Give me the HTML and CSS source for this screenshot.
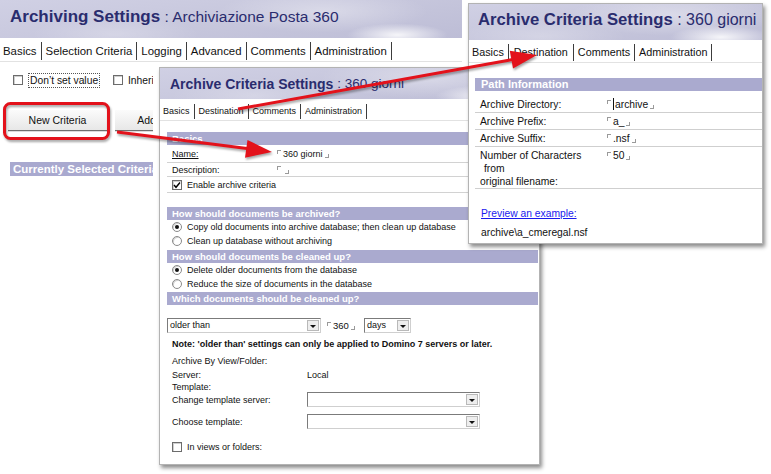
FILE: index.html
```html
<!DOCTYPE html>
<html>
<head>
<meta charset="utf-8">
<title>Archiving Settings</title>
<link rel="stylesheet" href="styles.css">
</head>
<body>
<div class="desk">

  <div class="win base">
    <div class="banner"><span class="tb">Archiving Settings</span><span class="tr">&nbsp;: Archiviazione Posta 360</span></div>
    <div class="tabs">
      <span class="tab">Basics</span><span class="tab sel">Selection Criteria</span><span class="tab">Logging</span><span class="tab">Advanced</span><span class="tab">Comments</span><span class="tab">Administration</span>
    </div>
    <div class="base-body">
      <div class="chkrow">
        <span class="chk first"><span class="box"></span><span class="focus">Don’t set value</span></span>
        <span class="chk"><span class="box"></span><span>Inherit</span></span>
      </div>
      <div class="btnrow"><span class="btn">New Criteria</span><span class="btn add">Add Criteria</span></div>
      <div class="cur-bar">Currently Selected Criteria</div>
    </div>
  </div>

  <div class="win mid">
    <div class="banner"><span class="tb">Archive Criteria Settings</span><span class="tr">&nbsp;: 360 giorni</span></div>
    <div class="tabs">
      <span class="tab sel">Basics</span><span class="tab">Destination</span><span class="tab">Comments</span><span class="tab">Administration</span>
    </div>
    <div class="mbody">
      <div class="bar b1">Basics</div>
      <div class="frow r-name"><span class="lab"><u>Name:</u></span><span class="val"><i class="fo"></i>360 giorni<i class="fc"></i></span></div>
      <div class="frow r-desc"><span class="lab">Description:</span><span class="val"><i class="fo"></i><i class="fc"></i></span></div>
      <div class="frow r-en"><span class="box on"><svg width="8" height="8" viewBox="0 0 8 8"><path d="M1 4 L3 6.3 L7 1.5" fill="none" stroke="#000" stroke-width="1.4"/></svg></span><span class="ctext">Enable archive criteria</span></div>

      <div class="bar b2">How should documents be archived?</div>
      <div class="rrow"><span class="radio on"></span><span class="ctext">Copy old documents into archive database; then clean up database</span></div>
      <div class="rrow"><span class="radio"></span><span class="ctext">Clean up database without archiving</span></div>

      <div class="bar b3">How should documents be cleaned up?</div>
      <div class="rrow"><span class="radio on"></span><span class="ctext">Delete older documents from the database</span></div>
      <div class="rrow"><span class="radio"></span><span class="ctext">Reduce the size of documents in the database</span></div>

      <div class="bar b4">Which documents should be cleaned up?</div>
      <div class="selrow">
        <span class="sel-box w-older"><span class="sel-text">older than</span><span class="sel-btn"></span></span>
        <span class="numf"><i class="fo"></i>360<i class="fc"></i></span>
        <span class="sel-box w-days"><span class="sel-text">days</span><span class="sel-btn"></span></span>
      </div>
      <div class="note">Note: 'older than' settings can only be applied to Domino 7 servers or later.</div>
      <div class="prow r-abv"><span class="lab2">Archive By View/Folder:</span></div>
      <div class="prow r-srv"><span class="lab2">Server:</span><span>Local</span></div>
      <div class="prow r-tpl"><span class="lab2">Template:</span></div>
      <div class="prow r-cts"><span class="lab2">Change template server:</span><span class="sel-box w-tpl"><span class="sel-text"></span><span class="sel-btn"></span></span></div>
      <div class="prow r-ct"><span class="lab2">Choose template:</span><span class="sel-box w-tpl"><span class="sel-text"></span><span class="sel-btn"></span></span></div>
      <div class="prow r-inv"><span class="box"></span><span class="ctext">In views or folders:</span></div>
    </div>
  </div>

  <div class="win right">
    <div class="banner"><span class="tb">Archive Criteria Settings</span><span class="tr">&nbsp;: 360 giorni</span></div>
    <div class="tabs">
      <span class="tab">Basics</span><span class="tab sel">Destination</span><span class="tab">Comments</span><span class="tab">Administration</span>
    </div>
    <div class="rbody">
      <div class="bar pbar">Path Information</div>
      <div class="rrow2 first"><span class="lab3">Archive Directory:</span><span class="val"><i class="fo"></i><span class="caret"></span>archive<i class="fc"></i></span></div>
      <div class="rrow2"><span class="lab3">Archive Prefix:</span><span class="val"><i class="fo"></i>a_<i class="fc"></i></span></div>
      <div class="rrow2"><span class="lab3">Archive Suffix:</span><span class="val"><i class="fo"></i>.nsf<i class="fc"></i></span></div>
      <div class="rrow2 tall"><span class="lab3">Number of Characters<br><span class="ind">from</span><br>original filename:</span><span class="val"><i class="fo"></i>50<i class="fc"></i></span></div>
      <div class="preview"><span class="link">Preview an example:</span></div>
      <div class="example">archive\a_cmeregal.nsf</div>
    </div>
  </div>

  <svg class="anno" width="771" height="474" viewBox="0 0 771 474">
    <rect x="4.5" y="103.5" width="104" height="35" rx="6" ry="6" fill="none" stroke="#e3121b" stroke-width="3"/>
    <line x1="117" y1="132" x2="249" y2="148.8" stroke="#e3121b" stroke-width="3"/>
    <polygon points="272,152 245,157.7 247.5,140" fill="#e3121b"/>
    <line x1="238" y1="109" x2="513" y2="59.4" stroke="#e3121b" stroke-width="3"/>
    <polygon points="537,55 513,68.5 509.8,50.7" fill="#e3121b"/>
  </svg>
</div>
</body>
</html>
```

FILE: styles.css
```css
* { box-sizing: border-box; }
html, body { margin: 0; padding: 0; }
body {
  background: #fff;
  font-family: "Liberation Sans", Arial, sans-serif;
  color: #111;
}
.desk {
  position: relative;
  width: 771px;
  height: 474px;
  overflow: hidden;
  background: #fff;
}
.win {
  position: absolute;
  background: #fff;
  overflow: hidden;
}

/* ---------- banners ---------- */
.banner {
  display: flex;
  align-items: center;
  white-space: nowrap;
  color: #2a2c6e;
  background:
    radial-gradient(ellipse 70px 16px at 86% 92%, rgba(255,255,255,.85), rgba(255,255,255,0) 72%),
    radial-gradient(ellipse 150px 30px at 70% 30%, rgba(255,255,255,.35), rgba(255,255,255,0) 70%),
    radial-gradient(ellipse 120px 25px at 25% 90%, rgba(255,255,255,.25), rgba(255,255,255,0) 70%),
    linear-gradient(172deg, #d0d0e4 0%, #c6c6dc 55%, #bdbdd6 100%);
}
.tb { font-weight: bold; }

/* ---------- tabs ---------- */
.tabs {
  display: flex;
  align-items: center;
  border-bottom: 1px solid #e2e2e2;
  white-space: nowrap;
  color: #111;
}
.tab {
  padding: 0 4px;
  border-right: 1px solid #3c3c3c;
}
.tab:first-child { padding-left: 3px; }

/* ---------- base window ---------- */
.base { left: 0; top: 0; width: 462px; height: 200px; }
.base .banner { height: 38px; padding: 0 0 5px 10px; }
.base .tb { font-size: 17px; }
.base .tr { font-size: 15.5px; }
.base .tabs { margin-top: 2px; height: 22px; font-size: 11.4px; }
.base .tab { height: 18px; line-height: 18px; }

.base-body { font-size: 10.3px; width: 153px; overflow: hidden; }
.chkrow {
  display: flex;
  align-items: center;
  margin-top: 10px;
  height: 16px;
  padding-left: 13px;
  white-space: nowrap;
}
.chk { display: flex; align-items: center; flex: none; }
.chk.first { width: 100px; }
.box {
  display: inline-flex;
  align-items: center;
  justify-content: center;
  width: 10px;
  height: 10px;
  flex: none;
  border: 1px solid #6c6c6c;
  background: #fff;
  box-shadow: inset 1px 1px 0 #cfcfcf;
}
.chk .box { margin-right: 5px; }
.focus {
  border: 1px dotted #555;
  padding: 0 1px;
  line-height: 13px;
}
.btnrow {
  display: flex;
  margin-top: 22px;
  padding-left: 8px;
}
.btn {
  display: flex;
  align-items: center;
  justify-content: center;
  width: 99px;
  height: 21px;
  flex: none;
  background: linear-gradient(#fbfbfb, #e7e7e7);
  border-bottom: 1px solid #6f6f6f;
  box-shadow: 0 1px 0 #dcdcdc;
  font-size: 10.5px;
  white-space: nowrap;
}
.btn.add { margin-left: 8px; width: 100px; }
.cur-bar {
  margin-top: 31px;
  margin-left: 10px;
  width: 143px;
  height: 14px;
  line-height: 14px;
  padding-left: 3px;
  overflow: hidden;
  background: #a9a9cf;
  color: #fff;
  font-weight: bold;
  font-size: 11.5px;
  white-space: nowrap;
}

/* ---------- shared form bits ---------- */
.bar {
  background: #aaaacf;
  color: #fff;
  font-weight: bold;
  white-space: nowrap;
}
.fo, .fc {
  display: inline-block;
  width: 4px;
  height: 4px;
  flex: none;
}
.fo {
  border-left: 1px solid #9a9a9a;
  border-top: 1px solid #9a9a9a;
  vertical-align: top;
  margin-right: 2px;
  margin-top: -4px;
}
.fc {
  border-right: 1px solid #9a9a9a;
  border-bottom: 1px solid #9a9a9a;
  vertical-align: bottom;
  margin-left: 2px;
  margin-bottom: -5px;
}
.radio {
  position: relative;
  display: inline-block;
  width: 10px;
  height: 10px;
  flex: none;
  border-radius: 50%;
  border: 1px solid #8a8a8a;
  background: #fff;
  box-shadow: inset 1px 1px 0 #d4d4d4;
}
.radio.on::after {
  content: "";
  position: absolute;
  left: 2px;
  top: 2px;
  width: 4px;
  height: 4px;
  border-radius: 50%;
  background: #111;
}
.ctext { margin-left: 5px; }
.sel-box {
  display: flex;
  height: 15px;
  flex: none;
  border: 1px solid;
  border-color: #7b7b7b #cfcfcf #cfcfcf #7b7b7b;
  background: #fff;
}
.sel-text {
  flex: 1;
  padding-left: 2px;
  line-height: 13px;
  font-size: 9px;
}
.sel-btn {
  position: relative;
  width: 12px;
  margin: 1px;
  background: #eeeeee;
  border: 1px solid #b9b9b9;
}
.sel-btn::after {
  content: "";
  position: absolute;
  left: 2px;
  top: 4px;
  border-left: 3px solid transparent;
  border-right: 3px solid transparent;
  border-top: 3px solid #111;
}

/* ---------- middle window ---------- */
.mid {
  left: 159px;
  top: 67px;
  width: 381px;
  height: 398px;
  border: 1px solid #b3b3b3;
  box-shadow: 2px 3px 4px rgba(0,0,0,.45);
}
.mid .banner { height: 31px; padding-left: 10px; }
.mid .tb { font-size: 14px; }
.mid .tr { font-size: 13.5px; }
.mid .tabs { margin-top: 3px; height: 19px; font-size: 9px; }
.mid .tab { height: 15px; line-height: 15px; }

.mbody { padding: 0 1px 0 7px; font-size: 9px; }
.mbody .bar { height: 13px; line-height: 13px; font-size: 9.5px; padding-left: 5px; }
.b1 { margin-top: 11px; }
.b2 { margin-top: 14px; }
.b3 { margin-top: 2px; }
.b4 { margin-top: 1px; }
.frow {
  display: flex;
  align-items: center;
  padding-left: 5px;
  border-bottom: 1px solid #d2d2d2;
  white-space: nowrap;
}
.r-name { height: 18px; }
.r-desc { height: 14px; }
.r-en { height: 16px; }
.lab { width: 105px; flex: none; }
.val { display: inline-flex; align-items: center; white-space: nowrap; }
.rrow {
  display: flex;
  align-items: center;
  height: 14px;
  padding-left: 5px;
  white-space: nowrap;
}
.selrow {
  display: flex;
  align-items: center;
  margin-top: 13px;
  height: 15px;
}
.w-older { width: 154px; }
.numf {
  display: inline-flex;
  align-items: center;
  width: 43px;
  padding-left: 6px;
  font-size: 9.5px;
}
.w-days { width: 47px; }
.note {
  margin-top: 4px;
  height: 14px;
  line-height: 14px;
  padding-left: 5px;
  font-weight: bold;
  white-space: nowrap;
}
.prow {
  display: flex;
  align-items: center;
  padding-left: 5px;
  white-space: nowrap;
}
.lab2 { width: 135px; flex: none; }
.r-abv { margin-top: 3px; height: 14px; }
.r-srv { height: 13px; }
.r-tpl { height: 11px; }
.r-cts { height: 15px; }
.r-ct { margin-top: 7px; height: 15px; }
.r-inv { margin-top: 11px; height: 14px; }
.w-tpl { width: 173px; }

/* ---------- right window ---------- */
.right {
  left: 468px;
  top: 3px;
  width: 295px;
  height: 241px;
  border: 1px solid #b3b3b3;
  box-shadow: 2px 3px 4px rgba(0,0,0,.45);
}
.right .banner { height: 36px; padding: 0 0 4px 9px; }
.right .tb { font-size: 16.7px; }
.right .tr { font-size: 16px; }
.right .tabs { margin-top: 2px; height: 21px; font-size: 10.8px; }
.right .tab { height: 17px; line-height: 17px; }
.right .tab.sel { padding: 0 5px; }

.rbody { padding-left: 6px; font-size: 10.3px; }
.pbar {
  margin-top: 15px;
  height: 13px;
  line-height: 13px;
  font-size: 11px;
  padding-left: 6px;
}
.rrow2 {
  display: flex;
  align-items: center;
  height: 17px;
  padding-left: 5px;
  border-bottom: 1px solid #cfcfcf;
  white-space: nowrap;
}
.rrow2.first { margin-top: 5px; }
.rrow2.tall {
  height: 42px;
  align-items: flex-start;
  padding-top: 2px;
  line-height: 13px;
}
.lab3 { width: 127px; flex: none; }
.ind { padding-left: 4px; }
.caret {
  display: inline-block;
  width: 1px;
  height: 12px;
  background: #111;
  margin-right: 1px;
}
.preview {
  margin-top: 18px;
  height: 13px;
  line-height: 13px;
  padding-left: 6px;
}
.link { color: #1a1aee; text-decoration: underline; }
.example {
  margin-top: 6px;
  height: 13px;
  line-height: 13px;
  padding-left: 6px;
}

/* ---------- annotations ---------- */
.anno {
  position: absolute;
  left: 0;
  top: 0;
  pointer-events: none;
  filter: drop-shadow(1px 2px 1.2px rgba(0,0,0,.35));
}
```
